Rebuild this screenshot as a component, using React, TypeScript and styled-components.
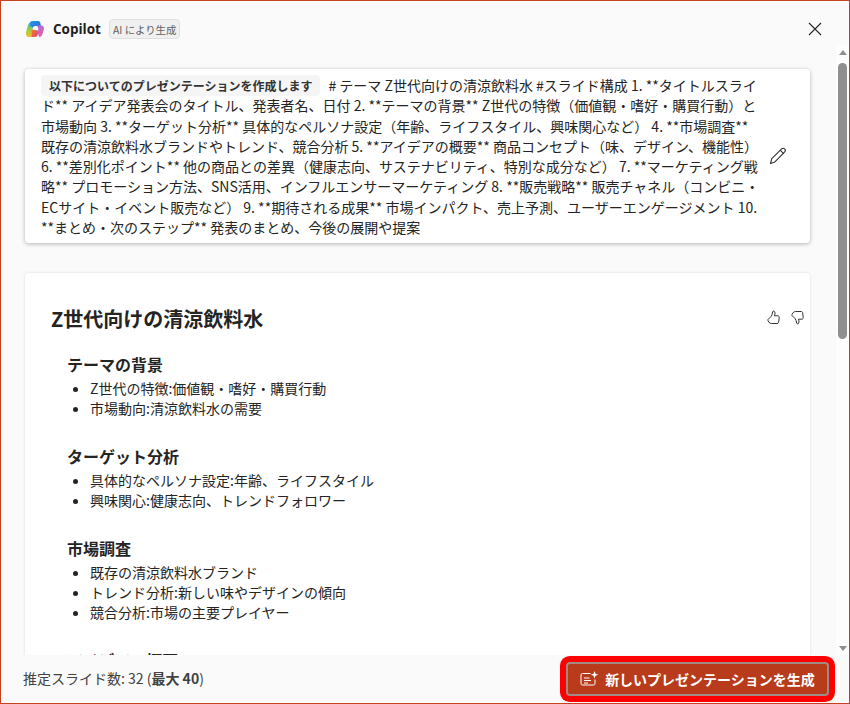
import React from "react";
import styled, { createGlobalStyle } from "styled-components";

const Global = createGlobalStyle`
  html, body { margin: 0; padding: 0; width: 850px; height: 704px; overflow: hidden; }
  * { box-sizing: border-box; }
  body { font-family: "Noto Sans CJK JP", "Noto Sans", sans-serif; color: #242424; }
`;

const Frame = styled.div`
  width: 850px; height: 704px;
  display: flex; flex-direction: column;
  background: #fafafa;
  border: 1px solid #c8401f;
`;
const Header = styled.header`
  height: 44px; flex: none;
  display: flex; align-items: center;
  padding: 12px 26px 0 24px;
`;
const Brand = styled.span`
  font: 700 13.5px "Open Sans", "Noto Sans", sans-serif;
  margin-left: 8px; color: #1f1f1f;
`;
const AiBadge = styled.span`
  margin-left: 8px; height: 20px; padding: 0 3px;
  display: flex; align-items: center;
  font-size: 10.4px; color: #616161;
  background: #f0f0f0; border: 1px solid #e0e0e0; border-radius: 4px;
`;
const CloseButton = styled.button`
  margin-left: auto; padding: 0; border: 0; background: none;
  width: 16px; height: 16px; display: flex; color: #242424;
`;
const Middle = styled.div`
  flex: 1; min-height: 0; display: flex;
`;
const Scroller = styled.main`
  flex: 1; min-width: 0; overflow: hidden;
  padding: 24px 24px 0 24px;
  display: flex; flex-direction: column; gap: 30px;
`;
const ScrollBar = styled.div`
  width: 13px; flex: none;
  display: flex; flex-direction: column; align-items: center;
  background: #fdfdfd; padding: 5px 0 4px;
`;
const Arrow = styled.div<{ $down?: boolean }>`
  width: 0; height: 0; flex: none;
  border-left: 4.5px solid transparent; border-right: 4.5px solid transparent;
  ${(p) => (p.$down ? "border-top: 5px solid #8f8f8f;" : "border-bottom: 5px solid #8f8f8f;")}
`;
const Thumb = styled.div`
  width: 9px; height: 276px; margin-top: 8px; flex: none;
  background: #8f8f8f; border-radius: 5px;
`;
const Spacer = styled.div`flex: 1;`;
const PromptCard = styled.section`
  flex: none; width: 785px; height: 174px;
  background: #fff; border-radius: 4px;
  box-shadow: 0 1px 4px rgba(0,0,0,.28);
  padding: 0 23px 0 16px;
  display: flex; align-items: center; gap: 9px;
`;
const PromptText = styled.p`
  margin: 6px 0 0; flex: 1; align-self: flex-start;
  font-size: 14px; line-height: 20.3px; color: #242424;
`;
const Lead = styled.span`
  display: inline-block; font-size: 12px; font-weight: 700; line-height: 21px;
  margin: -2px 8px -1px 0;
  background: #f5f5f5; border-radius: 4px; padding: 0 8px; color: #333;
`;
const EditButton = styled.button`
  flex: none; padding: 0; border: 0; background: none; display: flex; color: #333;
`;
const OutlineCard = styled.article`
  flex: none; width: 785px; min-height: 420px;
  background: #fff; border-radius: 4px;
  box-shadow: 0 0 3px rgba(0,0,0,.12);
  padding: 30px 14px 0 26px;
  position: relative;
`;
const Feedback = styled.div`
  position: absolute; top: 37px; right: 6px;
  display: flex; gap: 11px; color: #333;
`;
const Title = styled.h1`
  margin: 0 0 17px; font-size: 20px; line-height: 32px; font-weight: 700; color: #242424;
`;
const Section = styled.section`
  margin: 0 0 26px 16px;
`;
const Heading = styled.h2`
  margin: 0 0 2px; font-size: 16px; line-height: 24px; font-weight: 700; color: #242424;
`;
const Bullets = styled.ul`
  margin: 0; padding: 0 0 0 23px;
  font-size: 14px; line-height: 20px; color: #242424;
`;
const Footer = styled.footer`
  height: 48px; flex: none;
  display: flex; align-items: center; justify-content: space-between;
  padding: 0 20px 0 22px; background: #fafafa;
`;
const Estimate = styled.div`
  font-size: 14px; line-height: 20px; color: #424242; margin-top: -3px;
  b { font-weight: 700; }
`;
const Generate = styled.button`
  width: 263px; height: 34px; padding: 0;
  display: flex; align-items: center; justify-content: center; gap: 6px;
  font: 700 14px "Noto Sans CJK JP", sans-serif; color: #fff;
  background: #b83b1b; border: 2px solid #a08a84;
  box-shadow: 0 0 0 6px #f00;
  border-radius: 4px;
  outline: none;
`;

const sections = [
  { h: "テーマの背景", items: ["Z世代の特徴:価値観・嗜好・購買行動", "市場動向:清涼飲料水の需要"] },
  { h: "ターゲット分析", items: ["具体的なペルソナ設定:年齢、ライフスタイル", "興味関心:健康志向、トレンドフォロワー"] },
  { h: "市場調査", items: ["既存の清涼飲料水ブランド", "トレンド分析:新しい味やデザインの傾向", "競合分析:市場の主要プレイヤー"] },
  { h: "アイデアの概要", items: [] as string[] },
];

const CopilotLogo = () => (
  <svg width="20" height="20" viewBox="0 0 20 20">
    <defs>
      <linearGradient id="a" x1="0" y1="0" x2="1" y2="1"><stop offset="0" stopColor="#1fa0e8" /><stop offset="1" stopColor="#3558d0" /></linearGradient>
      <linearGradient id="b" x1="0" y1="0" x2="0" y2="1"><stop offset="0" stopColor="#28b8b0" /><stop offset=".5" stopColor="#9ad040" /><stop offset="1" stopColor="#f8b828" /></linearGradient>
      <linearGradient id="c" x1="0" y1="0" x2="1" y2="1"><stop offset="0" stopColor="#9a70e8" /><stop offset="1" stopColor="#f060a0" /></linearGradient>
      <linearGradient id="d" x1="0" y1="0" x2="1" y2="1"><stop offset="0" stopColor="#f08030" /><stop offset="1" stopColor="#e84070" /></linearGradient>
    </defs>
    <path d="M7 2h6c1.200 0 1.800.6 2.200 1.600L16 7h-5.500C8.600 7 7.800 8 7.400 9.500L6.500 13 3 12 4.500 5C5 3 5.800 2 7 2z" fill="url(#a)" />
    <path d="M5 3.600C3.800 4.400 3.300 5.600 2.800 7L1.200 12.500C.4 15.300 1.500 18 4 18h5c-1.800-.2-3.200-1.800-2.600-4.500L7.600 8.500 5 6.500z" fill="url(#b)" />
    <path d="M11 6.500h5c2.200 0 3.400 1.500 2.900 3.800l-1.500 5.200C16.800 17 15.700 18 14 18l-1-3.500c-.3-1.300.2-2.300.3-3.800.1-2-.6-3.600-2.300-4.200z" fill="url(#c)" />
    <path d="M6.300 14 7.200 10.500 13.300 11.500c.2 2.800-.8 6.500-3.300 6.500H7.500c-1-.5-1.500-2.500-1.200-4z" fill="url(#d)" />
  </svg>
);

const CloseIcon = () => (
  <svg width="16" height="16" viewBox="0 0 16 16" fill="none" stroke="currentColor" strokeWidth="1.1">
    <path d="M2 2l12 12M14 2 2 14" />
  </svg>
);

const PencilIcon = () => (
  <svg width="18" height="18" viewBox="0 0 18 18" fill="none" stroke="currentColor" strokeWidth="1.1" strokeLinejoin="round">
    <path d="M1.500 16.500 2.800 11.600 12.600 1.800c.8-.8 2.100-.8 3 .1s.9 2.200.1 3L5.900 14.900z" />
    <path d="M11.200 3.200l3.600 3.600" />
  </svg>
);

const thumbPath = "M1 9.500 4 6.500c1-1.200 1.400-2.800 1.600-4.600C5.800.8 7.400.7 7.800 2c.4 1.300.1 2.600-.4 3.800h3.400c1 0 1.600 1 1.400 2l-.6 4.500c-.2.9-.8 1.200-1.600 1.200H4.400C2.600 13.500.4 11 1 9.500z";

const ThumbUp = () => (
  <svg width="13" height="15" viewBox="0 0 13 15" fill="none" stroke="currentColor" strokeWidth="1" strokeLinejoin="round">
    <path d={thumbPath} />
  </svg>
);
const ThumbDown = () => (
  <svg width="13" height="15" viewBox="0 0 13 15" fill="none" stroke="currentColor" strokeWidth="1" strokeLinejoin="round">
    <path d={thumbPath} transform="translate(0 15) scale(1 -1)" />
  </svg>
);

const SlidesIcon = () => (
  <svg width="19" height="16" viewBox="0 0 19 16" fill="none" stroke="#fff" strokeWidth="1">
    <path d="M10.500 2.500H2.500A1.500 1.500 0 0 0 1 4v8.500A1.500 1.500 0 0 0 2.500 14h11a1.500 1.500 0 0 0 1.500-1.500V8.500" />
    <path d="M4 7h5.500M4 9.500h7M4 12h4" />
    <path d="M14.500 0l1 2.800 2.800 1-2.800 1-1 2.800-1-2.800-2.800-1 2.800-1z" fill="#fff" stroke="none" />
  </svg>
);

export default function App() {
  return (
    <Frame>
      <Global />
      <Header>
        <CopilotLogo />
        <Brand>Copilot</Brand>
        <AiBadge>AI により生成</AiBadge>
        <CloseButton aria-label="閉じる"><CloseIcon /></CloseButton>
      </Header>
      <Middle>
        <Scroller>
          <PromptCard>
            <PromptText>
              <Lead>以下についてのプレゼンテーションを作成します</Lead>
              # テーマ Z世代向けの清涼飲料水 #スライド構成 1. **タイトルスライド** アイデア発表会のタイトル、発表者名、日付 2. **テーマの背景** Z世代の特徴（価値観・嗜好・購買行動）と市場動向 3. **ターゲット分析** 具体的なペルソナ設定（年齢、ライフスタイル、興味関心など） 4. **市場調査** 既存の清涼飲料水ブランドやトレンド、競合分析 5. **アイデアの概要** 商品コンセプト（味、デザイン、機能性） 6. **差別化ポイント** 他の商品との差異（健康志向、サステナビリティ、特別な成分など） 7. **マーケティング戦略** プロモーション方法、SNS活用、インフルエンサーマーケティング 8. **販売戦略** 販売チャネル（コンビニ・ECサイト・イベント販売など） 9. **期待される成果** 市場インパクト、売上予測、ユーザーエンゲージメント 10. **まとめ・次のステップ** 発表のまとめ、今後の展開や提案
            </PromptText>
            <EditButton aria-label="編集"><PencilIcon /></EditButton>
          </PromptCard>
          <OutlineCard>
            <Feedback><ThumbUp /><ThumbDown /></Feedback>
            <Title>Z世代向けの清涼飲料水</Title>
            {sections.map((s) => (
              <Section key={s.h}>
                <Heading>{s.h}</Heading>
                {s.items.length > 0 && <Bullets>{s.items.map((i) => <li key={i}>{i}</li>)}</Bullets>}
              </Section>
            ))}
          </OutlineCard>
        </Scroller>
        <ScrollBar>
          <Arrow />
          <Thumb />
          <Spacer />
          <Arrow $down />
        </ScrollBar>
      </Middle>
      <Footer>
        <Estimate>推定スライド数: 32 (<b>最大 40</b>)</Estimate>
        <Generate><SlidesIcon />新しいプレゼンテーションを生成</Generate>
      </Footer>
    </Frame>
  );
}
